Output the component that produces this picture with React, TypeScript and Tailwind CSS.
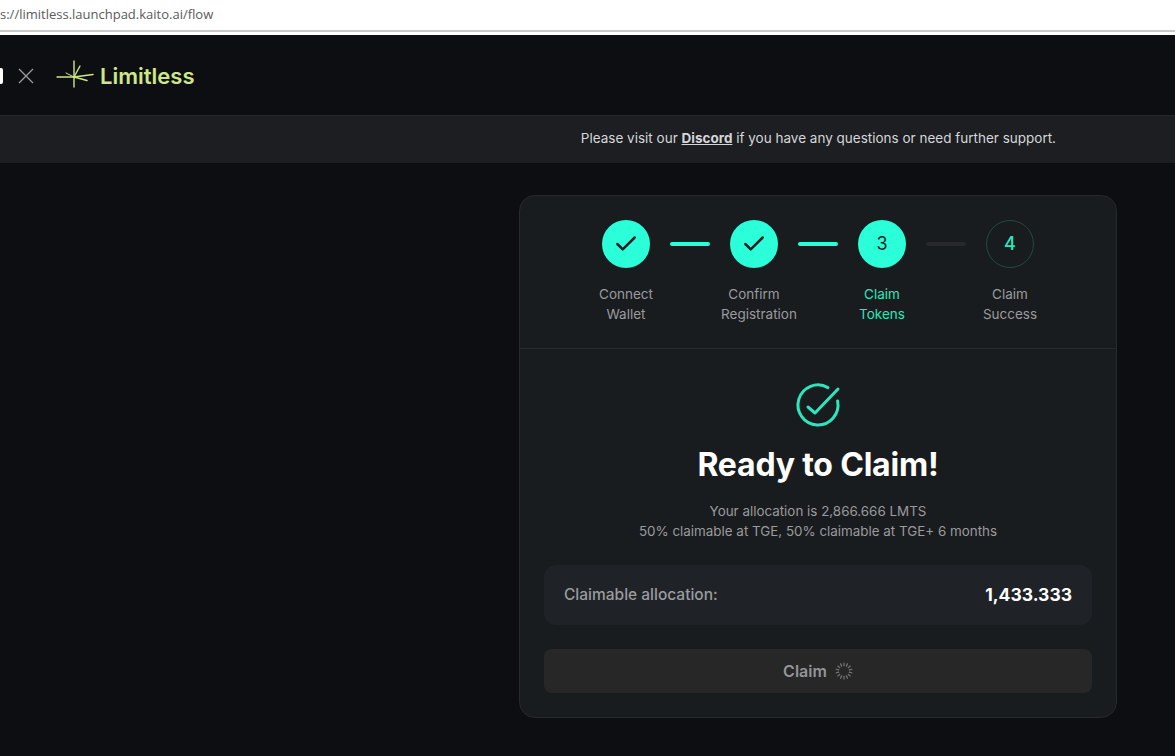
import React from 'react'
import { Check } from 'lucide-react'

const font = { fontFamily: 'Inter, "Liberation Sans", sans-serif' }

const steps = [
    { state: 'done', lines: ['Connect', 'Wallet'] },
    { state: 'done', lines: ['Confirm', 'Registration'] },
    { state: 'active', lines: ['Claim', 'Tokens'] },
    { state: 'todo', lines: ['Claim', 'Success'] },
]

const Logo = () => (
    <svg className="-mt-[4px]" width="38" height="28" viewBox="0 0 38 28" fill="none" stroke="#cfe884" strokeWidth="1.4" strokeLinecap="round">
        <path d="M18 1v26" />
        <path d="M1 17h17" />
        <path d="M18 17 37 14.5" />
        <path d="M18 17 24 6" />
        <path d="M18 17 31 20.5" />
        <path d="M18 17 10 13" strokeWidth="1" />
    </svg>
)

const ReadyIcon = () => (
    <svg width="48" height="48" viewBox="0 0 24 24" fill="none" stroke="#2ce6bd" strokeWidth="1.5" strokeLinecap="round" strokeLinejoin="round">
        <path d="M21.8 10A10 10 0 1 1 17 3.3" />
        <path d="M7 13l3.5 3L22 4" />
    </svg>
)

const Spinner = () => (
    <svg width="18" height="18" viewBox="0 0 18 18" stroke="#77797b" strokeWidth="1.2" strokeLinecap="round">
        {Array.from({ length: 14 }).map((_, i) => (
            <line key={i} x1="9" y1="1" x2="9" y2="3.6" transform={`rotate(${i * (360 / 14)} 9 9)`} />
        ))}
    </svg>
)

const Stepper = () => (
    <div className="flex flex-col items-center pt-6 pb-6 border-b border-[#26292d]">
        {/* circles*/}
        <div className="flex items-center">
            {steps.map((step, i) => (
                <React.Fragment key={i}>
                    {step.state === 'todo' ? (
                        <div className="w-12 h-12 rounded-full border border-[#23483f] flex items-center justify-center text-lg font-medium text-[#2ce6bd]">
                            {i + 1}
                        </div>
                    ) : (
                        <div className="w-12 h-12 rounded-full bg-[#2bffd9] flex items-center justify-center text-lg text-[#1a1d20]">
                            {step.state === 'done' ? <Check size={26} strokeWidth={2.3} /> : i + 1}
                        </div>
                    )}
                    {i < 3 && (
                        <div
                            className={
                                step.state === 'done'
                                    ? 'w-10 h-1 mx-5 rounded-full bg-[#2bffd9]'
                                    : 'w-10 h-1 mx-5 rounded-full bg-[#26282b]'
                            }
                        />
                    )}
                </React.Fragment>
            ))}
        </div>
        {/* labels*/}
        <div className="flex gap-20 mt-4">
            {steps.map((step, i) => (
                <div
                    key={i}
                    className={
                        step.state === 'active'
                            ? 'w-12 flex flex-col items-center whitespace-nowrap text-[13.5px] leading-5 text-[#2ce6bd]'
                            : 'w-12 flex flex-col items-center whitespace-nowrap text-[13.5px] leading-5 text-[#9a9b9d]'
                    }
                >
                    <span>{step.lines[0]}</span>
                    <span className={step.lines[1] === 'Registration' ? 'ml-[10px]' : ''}>{step.lines[1]}</span>
                </div>
            ))}
        </div>
    </div>
)

const App: React.FC = () => {
    return (
        <div className="w-[1175px] h-[756px] overflow-hidden flex flex-col bg-[#0d0e11]" style={font}>
            {/* browser address bar*/}
            <div className="h-[35px] shrink-0 bg-white">
                <div className="h-[32px] border-b-2 border-[#c9c9c9] flex items-center">
                    <span className="text-[13px] text-[#5a5a5a]" style={{ fontFamily: '"Open Sans", sans-serif' }}>
                        s://limitless.launchpad.kaito.ai/flow
                    </span>
                </div>
            </div>

            {/* header*/}
            <div className="h-[80px] shrink-0 flex items-center pt-[2px]">
                <div className="w-[3px] h-[16px] bg-white rounded-r-[2px]" />
                <svg className="ml-[15px]" width="16" height="16" viewBox="0 0 16 16" stroke="#9b9c9e" strokeWidth="1.3">
                    <path d="M1 1l14 14M15 1 1 15" />
                </svg>
                <div className="ml-[22px] flex items-center gap-[6px]">
                    <Logo />
                    <span className="text-[22px] font-semibold text-[#cfe884]">Limitless</span>
                </div>
            </div>

            {/* notice*/}
            <div className="h-[48px] shrink-0 bg-[#1c1e22] border-t border-[#24262a] flex items-center justify-end pr-[119px]">
                <p className="-mt-[2px] text-[13.5px] text-[#d5d6d7]">
                    Please visit our <span className="font-bold underline">Discord</span> if you have any questions or need further support.
                </p>
            </div>

            {/* card*/}
            <div className="flex justify-end pr-[58px] pt-[32px]">
                <div className="w-[598px] h-[523px] rounded-2xl bg-[#191c1f] border border-[#26292d]">
                    <Stepper />
                    <div className="flex flex-col items-center px-6 pt-8">
                        <ReadyIcon />
                        <h1 className="mt-4 text-[32px] leading-10 font-bold text-white tracking-[-0.2px]">Ready to Claim!</h1>
                        <p className="mt-4 text-[13.4px] leading-5 text-[#9a9b9d] text-center">
                            Your allocation is 2,866.666 LMTS
                            <br />
                            50% claimable at TGE, 50% claimable at TGE+ 6 months
                        </p>
                        <div className="mt-6 w-full h-[60px] rounded-xl bg-[#1f2226] flex items-center justify-between px-5">
                            <span className="text-[15.5px] font-medium text-[#9a9c9f]">Claimable allocation:</span>
                            <span className="text-[17.5px] font-bold text-white">1,433.333</span>
                        </div>
                        <button className="mt-6 w-full h-11 rounded-lg bg-[#272727] flex items-center justify-center gap-2">
                            <span className="text-base font-semibold text-[#939598]">Claim</span>
                            <Spinner />
                        </button>
                    </div>
                </div>
            </div>
        </div>
    )
}

export default App
